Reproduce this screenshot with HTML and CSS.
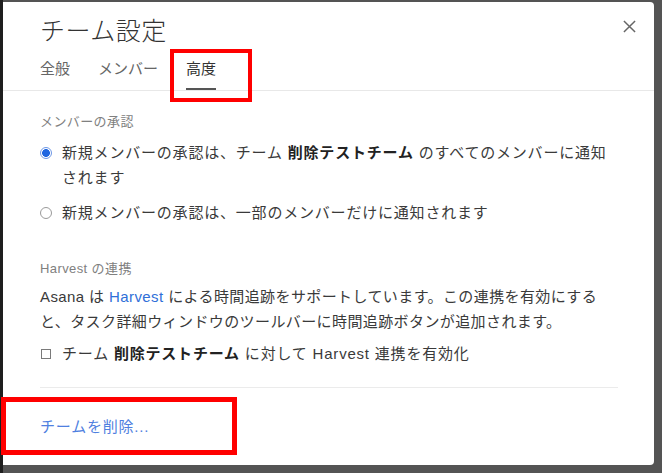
FILE: index.html
```html
<!DOCTYPE html>
<html lang="ja">
<head>
  <meta charset="UTF-8" />
  <title>チーム設定</title>
  <link rel="stylesheet" href="styles.css">
</head>
<body>
  <div class="dialog">
    <div class="head">
      <div class="head-row">
        <div class="title">チーム設定</div>
        <button class="close" aria-label="close">
          <svg viewBox="0 0 14 14" xmlns="http://www.w3.org/2000/svg">
            <path d="M1 1L13 13M13 1L1 13" stroke="#666" stroke-width="1.6" fill="none"/>
          </svg>
        </button>
      </div>
      <div class="tabs">
        <span class="tab">全般</span>
        <span class="tab">メンバー</span>
        <span class="tab active">高度</span>
      </div>
    </div>

    <div class="body">
      <div class="label">メンバーの承認</div>
      <div class="option first">
        <span class="radio checked"></span>
        <span class="opt-text">新規メンバーの承認は、チーム <b>削除テストチーム</b> のすべてのメンバーに通知されます</span>
      </div>
      <div class="option">
        <span class="radio"></span>
        <span class="opt-text">新規メンバーの承認は、一部のメンバーだけに通知されます</span>
      </div>

      <div class="label harvest">Harvest の連携</div>
      <p class="desc">Asana は <a class="link">Harvest</a> による時間追跡をサポートしています。この連携を有効にすると、タスク詳細ウィンドウのツールバーに時間追跡ボタンが追加されます。</p>
      <div class="option check-row">
        <span class="check"></span>
        <span class="opt-text">チーム <b>削除テストチーム</b> に対して Harvest 連携を有効化</span>
      </div>

      <div class="rule"></div>
      <a class="delete">チームを削除...</a>
    </div>
  </div>

  <!-- annotation boxes -->
  <div class="mark mark-tab"></div>
  <div class="mark mark-delete"></div>
</body>
</html>
```

FILE: styles.css
```css
html, body {
  margin: 0;
  padding: 0;
  height: 100%;
  overflow: hidden;
}

body {
  background: linear-gradient(to right, #1e1e1e 3px, #545454 3px);
  padding: 2px 8px 0 3px;
  box-sizing: border-box;
  font-family: "Liberation Sans", "Noto Sans CJK JP", sans-serif;
  color: #3a3a3a;
}

.dialog {
  height: 463px;
  background: #fff;
  border-radius: 0 4px 4px 0;
  display: flex;
  flex-direction: column;
}

/* header */
.head {
  padding: 11px 18px 0 37px;
  border-bottom: 1px solid #e8e8e8;
}
.head-row {
  display: flex;
  justify-content: space-between;
  align-items: flex-start;
}
.title {
  font-family: "Noto Sans CJK JP", sans-serif;
  font-size: 25px;
  font-weight: 300;
  line-height: 32px;
  color: #333;
  letter-spacing: 0.5px;
}
.close {
  margin-top: 7px;
  width: 13px;
  height: 13px;
  padding: 0;
  border: 0;
  background: none;
  display: flex;
}
.close svg { width: 13px; height: 13px; }

.tabs {
  display: flex;
  gap: 28px;
  margin-top: 14px;
}
.tab {
  font-size: 15px;
  line-height: 20px;
  color: #666;
  padding-bottom: 9px;
  border-bottom: 2px solid transparent;
}
.tab.active {
  color: #333;
  border-bottom-color: #555;
}

/* body */
.body {
  padding: 22px 36px 0 37px;
  display: flex;
  flex-direction: column;
}
.label {
  font-size: 13px;
  line-height: 18px;
  color: #808080;
  letter-spacing: 0.4px;
}
.label.harvest { margin-top: 35px; }

.option {
  display: flex;
  align-items: flex-start;
  gap: 10px;
  font-size: 15px;
  line-height: 25px;
  letter-spacing: 0.8px;
  margin-top: 10px;
}
.option.first { margin-top: 9px; }
.option b { font-weight: 700; color: #222; }

.radio {
  flex: none;
  width: 12px;
  height: 12px;
  margin-top: 7px;
  border-radius: 50%;
  border: 1px solid #9a9a9a;
  box-sizing: border-box;
}
.radio.checked {
  border: 1px solid #6f98e6;
  background: radial-gradient(circle, #1f66e0 0 3.6px, #fff 4.2px);
}

.check {
  flex: none;
  width: 10px;
  height: 10px;
  margin: 8px 1px 0 1px;
  border: 1px solid #7a7a7a;
  box-sizing: border-box;
}
.check-row { margin-top: 7px; }

.desc {
  margin: 6px 0 0;
  font-size: 15px;
  line-height: 25px;
  letter-spacing: 0.4px;
}
.link {
  color: #2f6fd8;
}

.rule {
  height: 1px;
  background: #ebebeb;
  margin-top: 21px;
}
.delete {
  margin-top: 26px;
  font-size: 15px;
  line-height: 25px;
  letter-spacing: 0.8px;
  color: #4f80e0;
  align-self: flex-start;
}

/* red annotation rectangles */
.mark {
  position: absolute;
  border: 4px solid #ff0000;
  box-sizing: border-box;
  pointer-events: none;
}
.mark-tab {
  left: 170px;
  top: 49px;
  width: 82px;
  height: 53px;
}
.mark-delete {
  left: 1px;
  top: 397px;
  width: 236px;
  height: 58px;
  border-width: 5px;
}
```
